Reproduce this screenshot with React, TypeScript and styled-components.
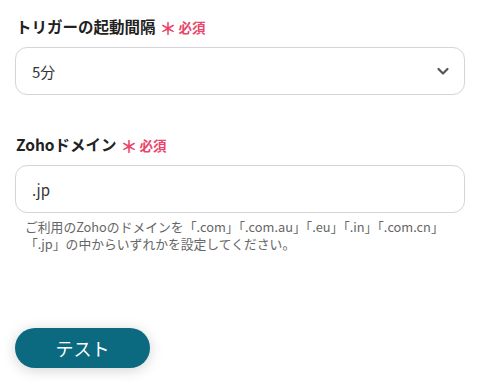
import styled, { createGlobalStyle } from "styled-components";

const GlobalStyle = createGlobalStyle`
  body {
    margin: 0;
    background: #ffffff;
    font-family: "Noto Sans CJK JP", "Noto Sans", sans-serif;
  }
`;

const Page = styled.div`
  width: 482px;
  height: 382px;
  box-sizing: border-box;
  padding: 14px 17px 0 15px;
  display: flex;
  flex-direction: column;
`;

const Field = styled.div<{ $gap?: number }>`
  display: flex;
  flex-direction: column;
  margin-bottom: ${(p) => p.$gap ?? 0}px;
`;

const Label = styled.div`
  display: flex;
  align-items: baseline;
  gap: 4px;
  font-size: 15.5px;
  font-weight: 700;
  color: #222;
  line-height: 24px;
  padding-left: 1px;
  margin-bottom: 8px;
`;

const Required = styled.span`
  color: #e9466a;
  font-size: 13.5px;
  font-weight: 700;
  display: flex;
  align-items: baseline;
  gap: 2px;
`;

const Star = styled.span`
  font-size: 17px;
  position: relative;
  top: 2px;
`;

const Box = styled.div`
  height: 48px;
  box-sizing: border-box;
  border: 1px solid #d3d4dc;
  border-radius: 12px;
  display: flex;
  align-items: center;
  justify-content: space-between;
  padding: 0 14px 0 16px;
  font-size: 15px;
  color: #333;
`;

const Help = styled.div`
  font-size: 12.8px;
  line-height: 17px;
  color: #666;
  padding: 5px 0 0 10px;
`;

const HelpLine = styled.div`
  white-space: nowrap;
`;

const Spacer = styled.div`
  flex: 1;
`;

const Button = styled.button`
  width: 135px;
  height: 40px;
  border: none;
  border-radius: 20px;
  background: #0b6a80;
  color: #fff;
  font-family: inherit;
  font-size: 18px;
  box-shadow: 0 2px 14px rgba(0, 0, 0, 0.18);
  margin-bottom: 14px;
  cursor: pointer;
`;

const Chevron = () => (
  <svg width="14" height="14" viewBox="0 0 14 14">
    <path d="M2.5 5 L7 9.5 L11.5 5" fill="none" stroke="#555" strokeWidth="2.2" strokeLinecap="round" strokeLinejoin="round" />
  </svg>
);

const Req = () => (
  <Required>
    <Star>＊</Star>必須
  </Required>
);

export default function App() {
  return (
    <>
      <GlobalStyle />
      <Page>
        <Field $gap={37}>
          <Label>
            トリガーの起動間隔<Req />
          </Label>
          <Box>
            <span>5分</span>
            <Chevron />
          </Box>
        </Field>
        <Field>
          <Label>
            Zohoドメイン<Req />
          </Label>
          <Box>
            <span>.jp</span>
          </Box>
          <Help>
            <HelpLine>ご利用のZohoのドメインを「.com」「.com.au」「.eu」「.in」「.com.cn」</HelpLine>
            <HelpLine>「.jp」の中からいずれかを設定してください。</HelpLine>
          </Help>
        </Field>
        <Spacer />
        <Button>テスト</Button>
      </Page>
    </>
  );
}
